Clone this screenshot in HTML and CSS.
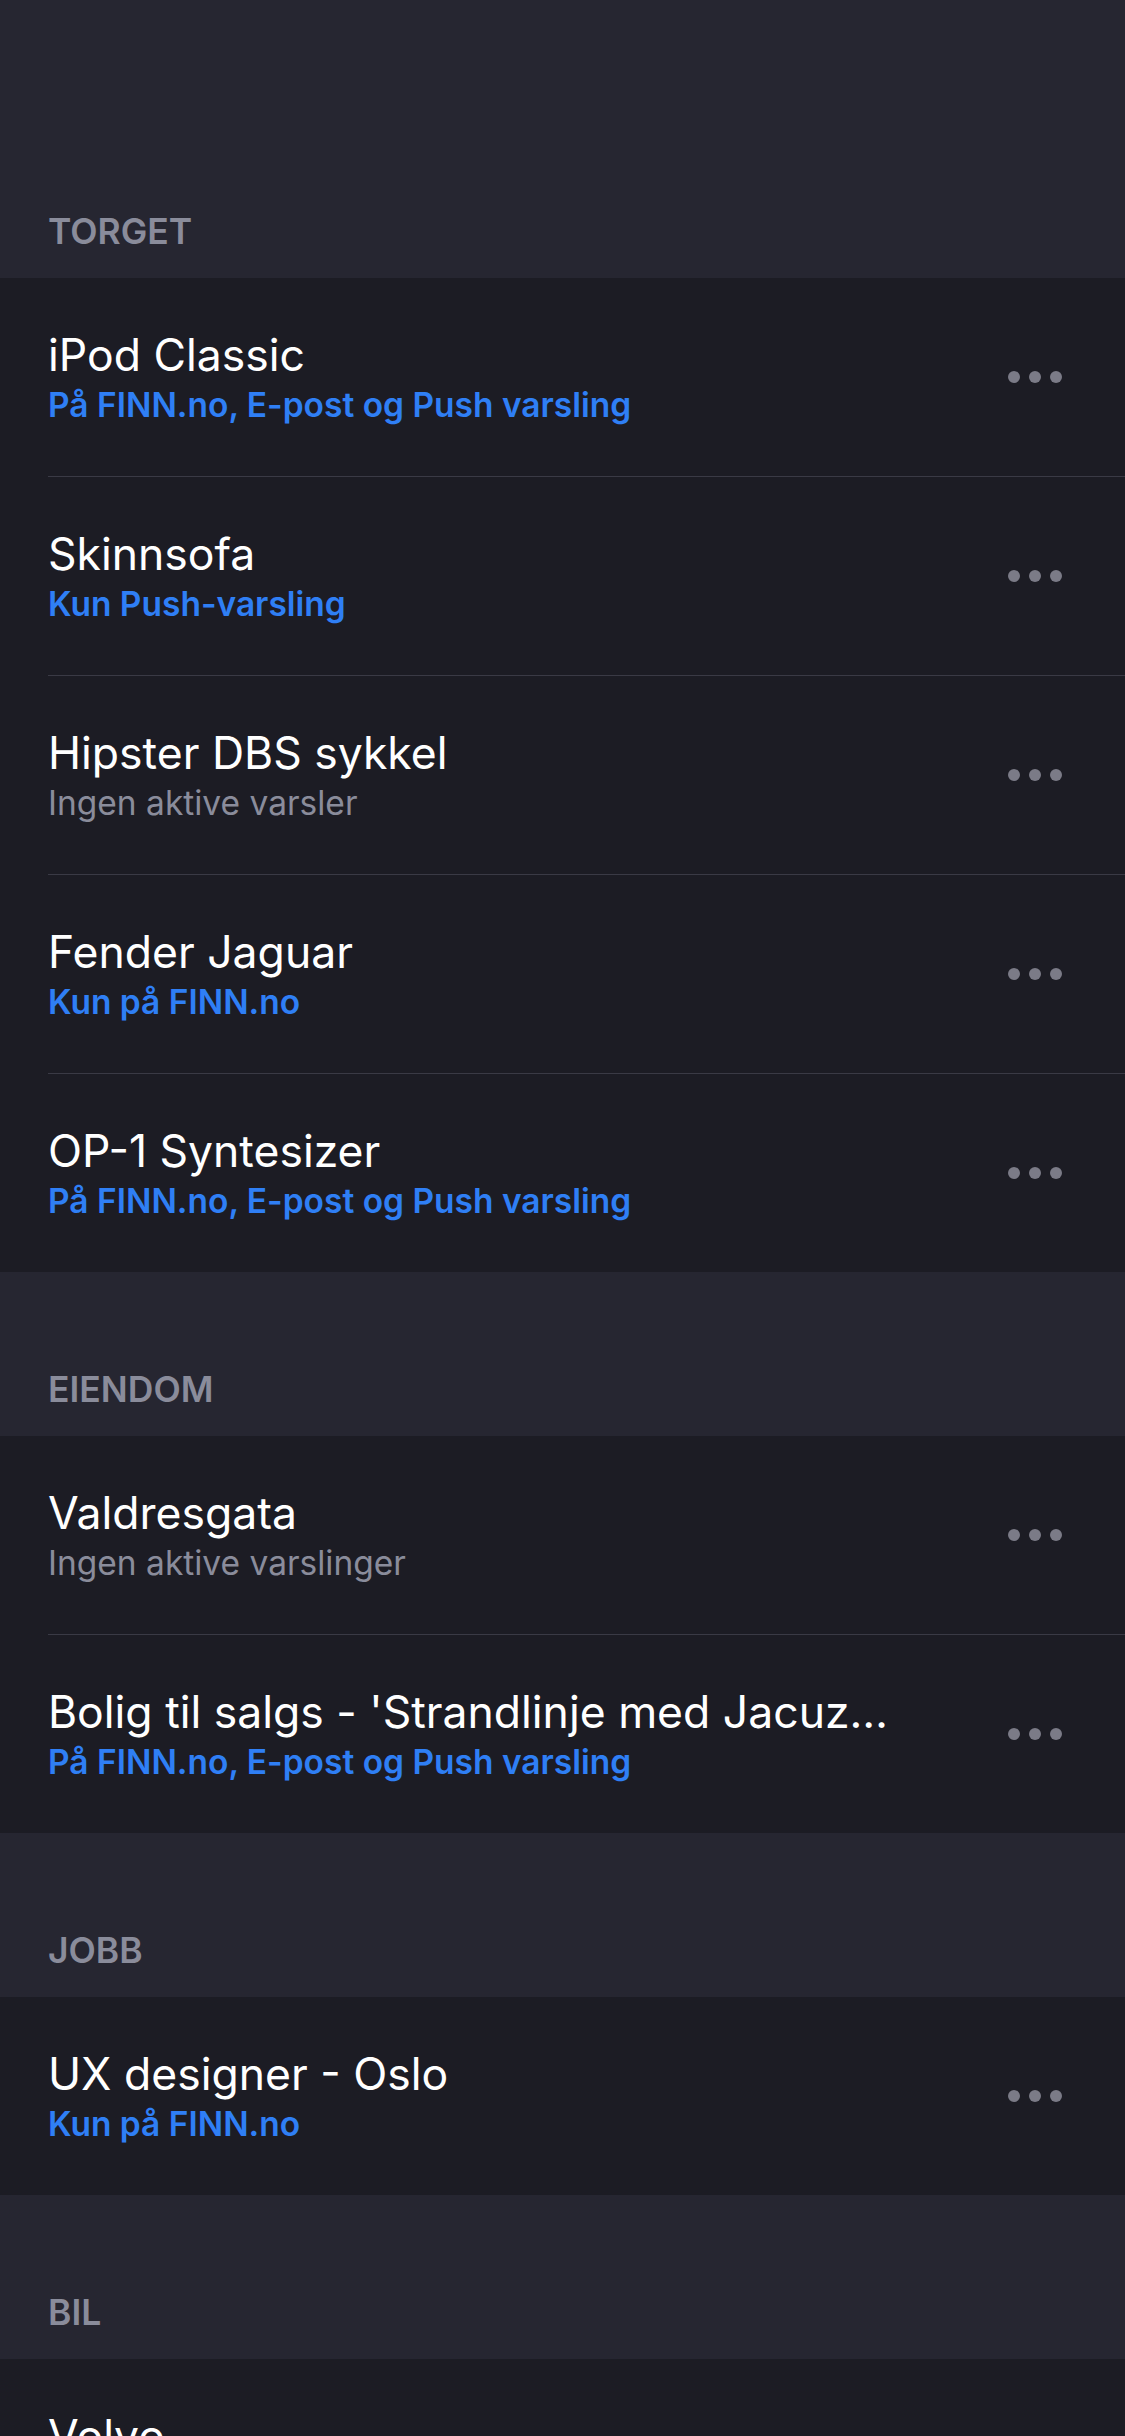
FILE: index.html
```html
<!DOCTYPE html>
<html lang="no">
<head>
<meta charset="utf-8">
<title>Lagrede søk</title>
<link rel="stylesheet" href="styles.css">
</head>
<body>
<main class="page">
  <section class="group">
    <h2 class="group-head group-head--first">TORGET</h2>
    <ul class="list">
      <li class="item"><div class="item-inner"><div class="text"><div class="title">iPod Classic</div><div class="sub sub--blue">På FINN.no, E-post og Push varsling</div></div><div class="more"><span></span><span></span><span></span></div></div></li>
      <li class="item"><div class="item-inner"><div class="text"><div class="title">Skinnsofa</div><div class="sub sub--blue">Kun Push-varsling</div></div><div class="more"><span></span><span></span><span></span></div></div></li>
      <li class="item"><div class="item-inner"><div class="text"><div class="title">Hipster DBS sykkel</div><div class="sub sub--grey">Ingen aktive varsler</div></div><div class="more"><span></span><span></span><span></span></div></div></li>
      <li class="item"><div class="item-inner"><div class="text"><div class="title">Fender Jaguar</div><div class="sub sub--blue">Kun på FINN.no</div></div><div class="more"><span></span><span></span><span></span></div></div></li>
      <li class="item"><div class="item-inner"><div class="text"><div class="title">OP-1 Syntesizer</div><div class="sub sub--blue">På FINN.no, E-post og Push varsling</div></div><div class="more"><span></span><span></span><span></span></div></div></li>
    </ul>
  </section>
  <section class="group">
    <h2 class="group-head">EIENDOM</h2>
    <ul class="list">
      <li class="item"><div class="item-inner"><div class="text"><div class="title">Valdresgata</div><div class="sub sub--grey">Ingen aktive varslinger</div></div><div class="more"><span></span><span></span><span></span></div></div></li>
      <li class="item"><div class="item-inner"><div class="text"><div class="title">Bolig til salgs - 'Strandlinje med Jacuzzi og sjøutsikt'</div><div class="sub sub--blue">På FINN.no, E-post og Push varsling</div></div><div class="more"><span></span><span></span><span></span></div></div></li>
    </ul>
  </section>
  <section class="group">
    <h2 class="group-head">JOBB</h2>
    <ul class="list">
      <li class="item"><div class="item-inner"><div class="text"><div class="title">UX designer - Oslo</div><div class="sub sub--blue">Kun på FINN.no</div></div><div class="more"><span></span><span></span><span></span></div></div></li>
    </ul>
  </section>
  <section class="group">
    <h2 class="group-head">BIL</h2>
    <ul class="list">
      <li class="item"><div class="item-inner"><div class="text"><div class="title">Volvo</div><div class="sub sub--blue">Kun på FINN.no</div></div><div class="more"><span></span><span></span><span></span></div></div></li>
    </ul>
  </section>
</main>
</body>
</html>
```
FILE: styles.css
```css
* { box-sizing: border-box; }
html, body {
  margin: 0;
  padding: 0;
  background: #262631;
}
body {
  font-family: Inter, "Noto Sans", "Liberation Sans", sans-serif;
  color: #ffffff;
  -webkit-font-smoothing: antialiased;
}
.page {
  display: flex;
  flex-direction: column;
  height: 2436px;
  overflow: hidden;
}
.group { display: flex; flex-direction: column; }
.group-head {
  margin: 0;
  height: 164px;
  display: flex;
  align-items: flex-end;
  padding: 0 48px 26px;
  font-size: 35.5px;
  line-height: 40px;
  font-weight: 600;
  color: #8a8c9b;
}
.group-head--first { height: 278px; }
.list {
  list-style: none;
  margin: 0;
  padding: 0;
  background: #1c1c24;
}
.item { padding-left: 48px; }
.item-inner {
  height: 198px;
  box-sizing: content-box;
  display: flex;
  align-items: center;
  padding-right: 63px;
}
.item + .item .item-inner {
  border-top: 1px solid #3a3a45;
}
.text {
  flex: 1;
  min-width: 0;
  padding-right: 104px;
  padding-top: 4px;
}
.title {
  font-size: 44.5px;
  line-height: 52px;
  font-weight: 400;
  color: #ffffff;
  white-space: nowrap;
  overflow: hidden;
  text-overflow: ellipsis;
}
.sub {
  font-size: 33.5px;
  line-height: 48px;
  white-space: nowrap;
}
.sub--blue { color: #2f7ff5; font-weight: 600; }
.sub--grey { color: #8a8c9b; font-weight: 400; }
.more {
  display: flex;
  gap: 9px;
  flex: none;
}
.more span {
  width: 12px;
  height: 12px;
  border-radius: 50%;
  background: #7b7b87;
}
```
